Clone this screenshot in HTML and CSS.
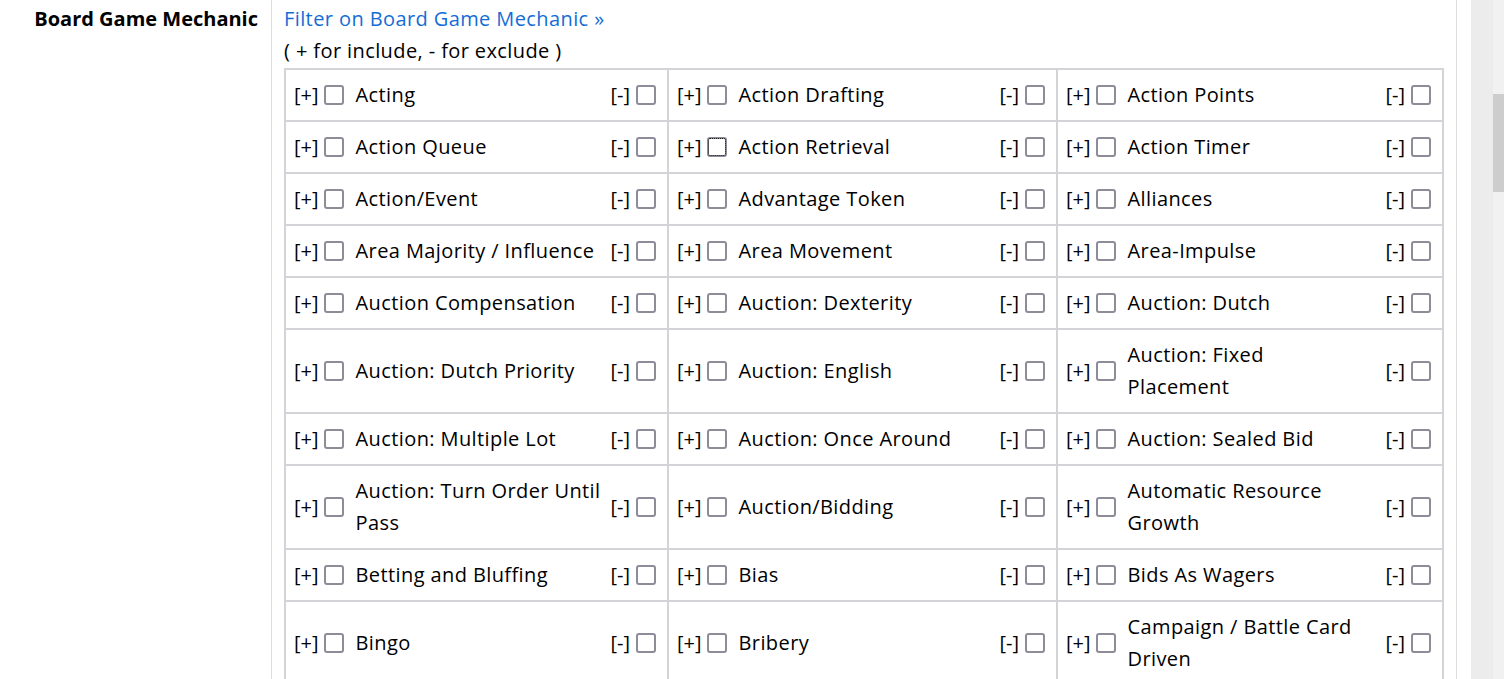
FILE: index.html
```html
<!DOCTYPE html>
<html lang="en">
<head>
<meta charset="utf-8">
<title>Board Game Mechanic</title>
<link rel="stylesheet" href="styles.css">
</head>
<body>
<div class="page">
  <div class="form-row">
    <div class="label-col"><span class="field-label">Board Game Mechanic</span></div>
    <div class="content-col">
      <a class="filter-link" href="#">Filter on Board Game Mechanic &raquo;</a>
      <div class="hint">( + for include, - for exclude )</div>
      <div class="mech-grid">
        <div class="cell"><span class="tag">[+]</span><input type="checkbox" class="cb inc"><span class="name">Acting</span><span class="tag minus">[-]</span><input type="checkbox" class="cb"></div>
        <div class="cell"><span class="tag">[+]</span><input type="checkbox" class="cb inc"><span class="name">Action Drafting</span><span class="tag minus">[-]</span><input type="checkbox" class="cb"></div>
        <div class="cell"><span class="tag">[+]</span><input type="checkbox" class="cb inc"><span class="name">Action Points</span><span class="tag minus">[-]</span><input type="checkbox" class="cb"></div>

        <div class="cell"><span class="tag">[+]</span><input type="checkbox" class="cb inc"><span class="name">Action Queue</span><span class="tag minus">[-]</span><input type="checkbox" class="cb"></div>
        <div class="cell"><span class="tag">[+]</span><input type="checkbox" class="cb inc focused"><span class="name">Action Retrieval</span><span class="tag minus">[-]</span><input type="checkbox" class="cb"></div>
        <div class="cell"><span class="tag">[+]</span><input type="checkbox" class="cb inc"><span class="name">Action Timer</span><span class="tag minus">[-]</span><input type="checkbox" class="cb"></div>

        <div class="cell"><span class="tag">[+]</span><input type="checkbox" class="cb inc"><span class="name">Action/Event</span><span class="tag minus">[-]</span><input type="checkbox" class="cb"></div>
        <div class="cell"><span class="tag">[+]</span><input type="checkbox" class="cb inc"><span class="name">Advantage Token</span><span class="tag minus">[-]</span><input type="checkbox" class="cb"></div>
        <div class="cell"><span class="tag">[+]</span><input type="checkbox" class="cb inc"><span class="name">Alliances</span><span class="tag minus">[-]</span><input type="checkbox" class="cb"></div>

        <div class="cell"><span class="tag">[+]</span><input type="checkbox" class="cb inc"><span class="name">Area Majority / Influence</span><span class="tag minus">[-]</span><input type="checkbox" class="cb"></div>
        <div class="cell"><span class="tag">[+]</span><input type="checkbox" class="cb inc"><span class="name">Area Movement</span><span class="tag minus">[-]</span><input type="checkbox" class="cb"></div>
        <div class="cell"><span class="tag">[+]</span><input type="checkbox" class="cb inc"><span class="name">Area-Impulse</span><span class="tag minus">[-]</span><input type="checkbox" class="cb"></div>

        <div class="cell"><span class="tag">[+]</span><input type="checkbox" class="cb inc"><span class="name">Auction Compensation</span><span class="tag minus">[-]</span><input type="checkbox" class="cb"></div>
        <div class="cell"><span class="tag">[+]</span><input type="checkbox" class="cb inc"><span class="name">Auction: Dexterity</span><span class="tag minus">[-]</span><input type="checkbox" class="cb"></div>
        <div class="cell"><span class="tag">[+]</span><input type="checkbox" class="cb inc"><span class="name">Auction: Dutch</span><span class="tag minus">[-]</span><input type="checkbox" class="cb"></div>

        <div class="cell"><span class="tag">[+]</span><input type="checkbox" class="cb inc"><span class="name">Auction: Dutch Priority</span><span class="tag minus">[-]</span><input type="checkbox" class="cb"></div>
        <div class="cell"><span class="tag">[+]</span><input type="checkbox" class="cb inc"><span class="name">Auction: English</span><span class="tag minus">[-]</span><input type="checkbox" class="cb"></div>
        <div class="cell"><span class="tag">[+]</span><input type="checkbox" class="cb inc"><span class="name">Auction: Fixed<br>Placement</span><span class="tag minus">[-]</span><input type="checkbox" class="cb"></div>

        <div class="cell"><span class="tag">[+]</span><input type="checkbox" class="cb inc"><span class="name">Auction: Multiple Lot</span><span class="tag minus">[-]</span><input type="checkbox" class="cb"></div>
        <div class="cell"><span class="tag">[+]</span><input type="checkbox" class="cb inc"><span class="name">Auction: Once Around</span><span class="tag minus">[-]</span><input type="checkbox" class="cb"></div>
        <div class="cell"><span class="tag">[+]</span><input type="checkbox" class="cb inc"><span class="name">Auction: Sealed Bid</span><span class="tag minus">[-]</span><input type="checkbox" class="cb"></div>

        <div class="cell"><span class="tag">[+]</span><input type="checkbox" class="cb inc"><span class="name">Auction: Turn Order Until Pass</span><span class="tag minus">[-]</span><input type="checkbox" class="cb"></div>
        <div class="cell"><span class="tag">[+]</span><input type="checkbox" class="cb inc"><span class="name">Auction/Bidding</span><span class="tag minus">[-]</span><input type="checkbox" class="cb"></div>
        <div class="cell"><span class="tag">[+]</span><input type="checkbox" class="cb inc"><span class="name">Automatic Resource Growth</span><span class="tag minus">[-]</span><input type="checkbox" class="cb"></div>

        <div class="cell"><span class="tag">[+]</span><input type="checkbox" class="cb inc"><span class="name">Betting and Bluffing</span><span class="tag minus">[-]</span><input type="checkbox" class="cb"></div>
        <div class="cell"><span class="tag">[+]</span><input type="checkbox" class="cb inc"><span class="name">Bias</span><span class="tag minus">[-]</span><input type="checkbox" class="cb"></div>
        <div class="cell"><span class="tag">[+]</span><input type="checkbox" class="cb inc"><span class="name">Bids As Wagers</span><span class="tag minus">[-]</span><input type="checkbox" class="cb"></div>

        <div class="cell"><span class="tag">[+]</span><input type="checkbox" class="cb inc"><span class="name">Bingo</span><span class="tag minus">[-]</span><input type="checkbox" class="cb"></div>
        <div class="cell"><span class="tag">[+]</span><input type="checkbox" class="cb inc"><span class="name">Bribery</span><span class="tag minus">[-]</span><input type="checkbox" class="cb"></div>
        <div class="cell"><span class="tag">[+]</span><input type="checkbox" class="cb inc"><span class="name">Campaign / Battle Card Driven</span><span class="tag minus">[-]</span><input type="checkbox" class="cb"></div>
      </div>
    </div>
  </div>
  <div class="scrollbar">
    <div class="scroll-gutter"></div>
    <div class="scroll-track"><div class="scroll-thumb"></div></div>
  </div>
</div>
</body>
</html>
```

FILE: styles.css
```css
html, body {
  margin: 0;
  padding: 0;
  height: 679px;
  overflow: hidden;
  background: #ffffff;
}

body {
  font-family: "Open Sans", "Liberation Sans", sans-serif;
  font-size: 20px;
  font-weight: 500;
  line-height: 32px;
  letter-spacing: 0.4px;
  color: #000000;
}

.page {
  display: flex;
  height: 679px;
}

.form-row {
  display: flex;
  width: 1457px;
  margin-right: 14px;
  align-items: stretch;
}

.label-col {
  width: 258px;
  padding: 3px 13px 0 0;
  border-right: 1px solid #dcdcdc;
  text-align: right;
}

.field-label {
  font-weight: 700;
  letter-spacing: 0;
}

.content-col {
  width: 1160px;
  padding: 3px 12px 0 12px;
  border-right: 1px solid #dcdcdc;
}

.filter-link {
  display: block;
  color: #146dd6;
  text-decoration: none;
}

.hint {
  margin-bottom: 1px;
}

.mech-grid {
  display: grid;
  grid-template-columns: 383px 389px 386px;
  border: 1px solid #d2d4d8;
}

.cell {
  display: flex;
  align-items: center;
  padding: 9px 11px 9px 8px;
  border: 1px solid #d2d4d8;
}

.tag {
  white-space: nowrap;
  letter-spacing: 0;
  margin-right: 5px;
}

.tag.minus {
  margin-left: 8px;
  margin-right: 6px;
}

.name {
  flex: 1;
  min-width: 0;
}

.cb {
  -webkit-appearance: none;
  appearance: none;
  flex: none;
  width: 20px;
  height: 20px;
  margin: 0;
  border: 2px solid #8e8c99;
  border-radius: 3px;
  background: #ffffff;
}

.cb.inc {
  margin-right: 12px;
}

.cb.focused {
  outline: 1px dotted #1a1a1a;
  outline-offset: -2px;
}

.scrollbar {
  display: flex;
  width: 33px;
  height: 679px;
}

.scroll-gutter {
  width: 22px;
  background: #ececec;
}

.scroll-track {
  width: 11px;
  background: #f1f1f1;
}

.scroll-thumb {
  margin-top: 94px;
  height: 98px;
  background: #cdcdcd;
}
```
